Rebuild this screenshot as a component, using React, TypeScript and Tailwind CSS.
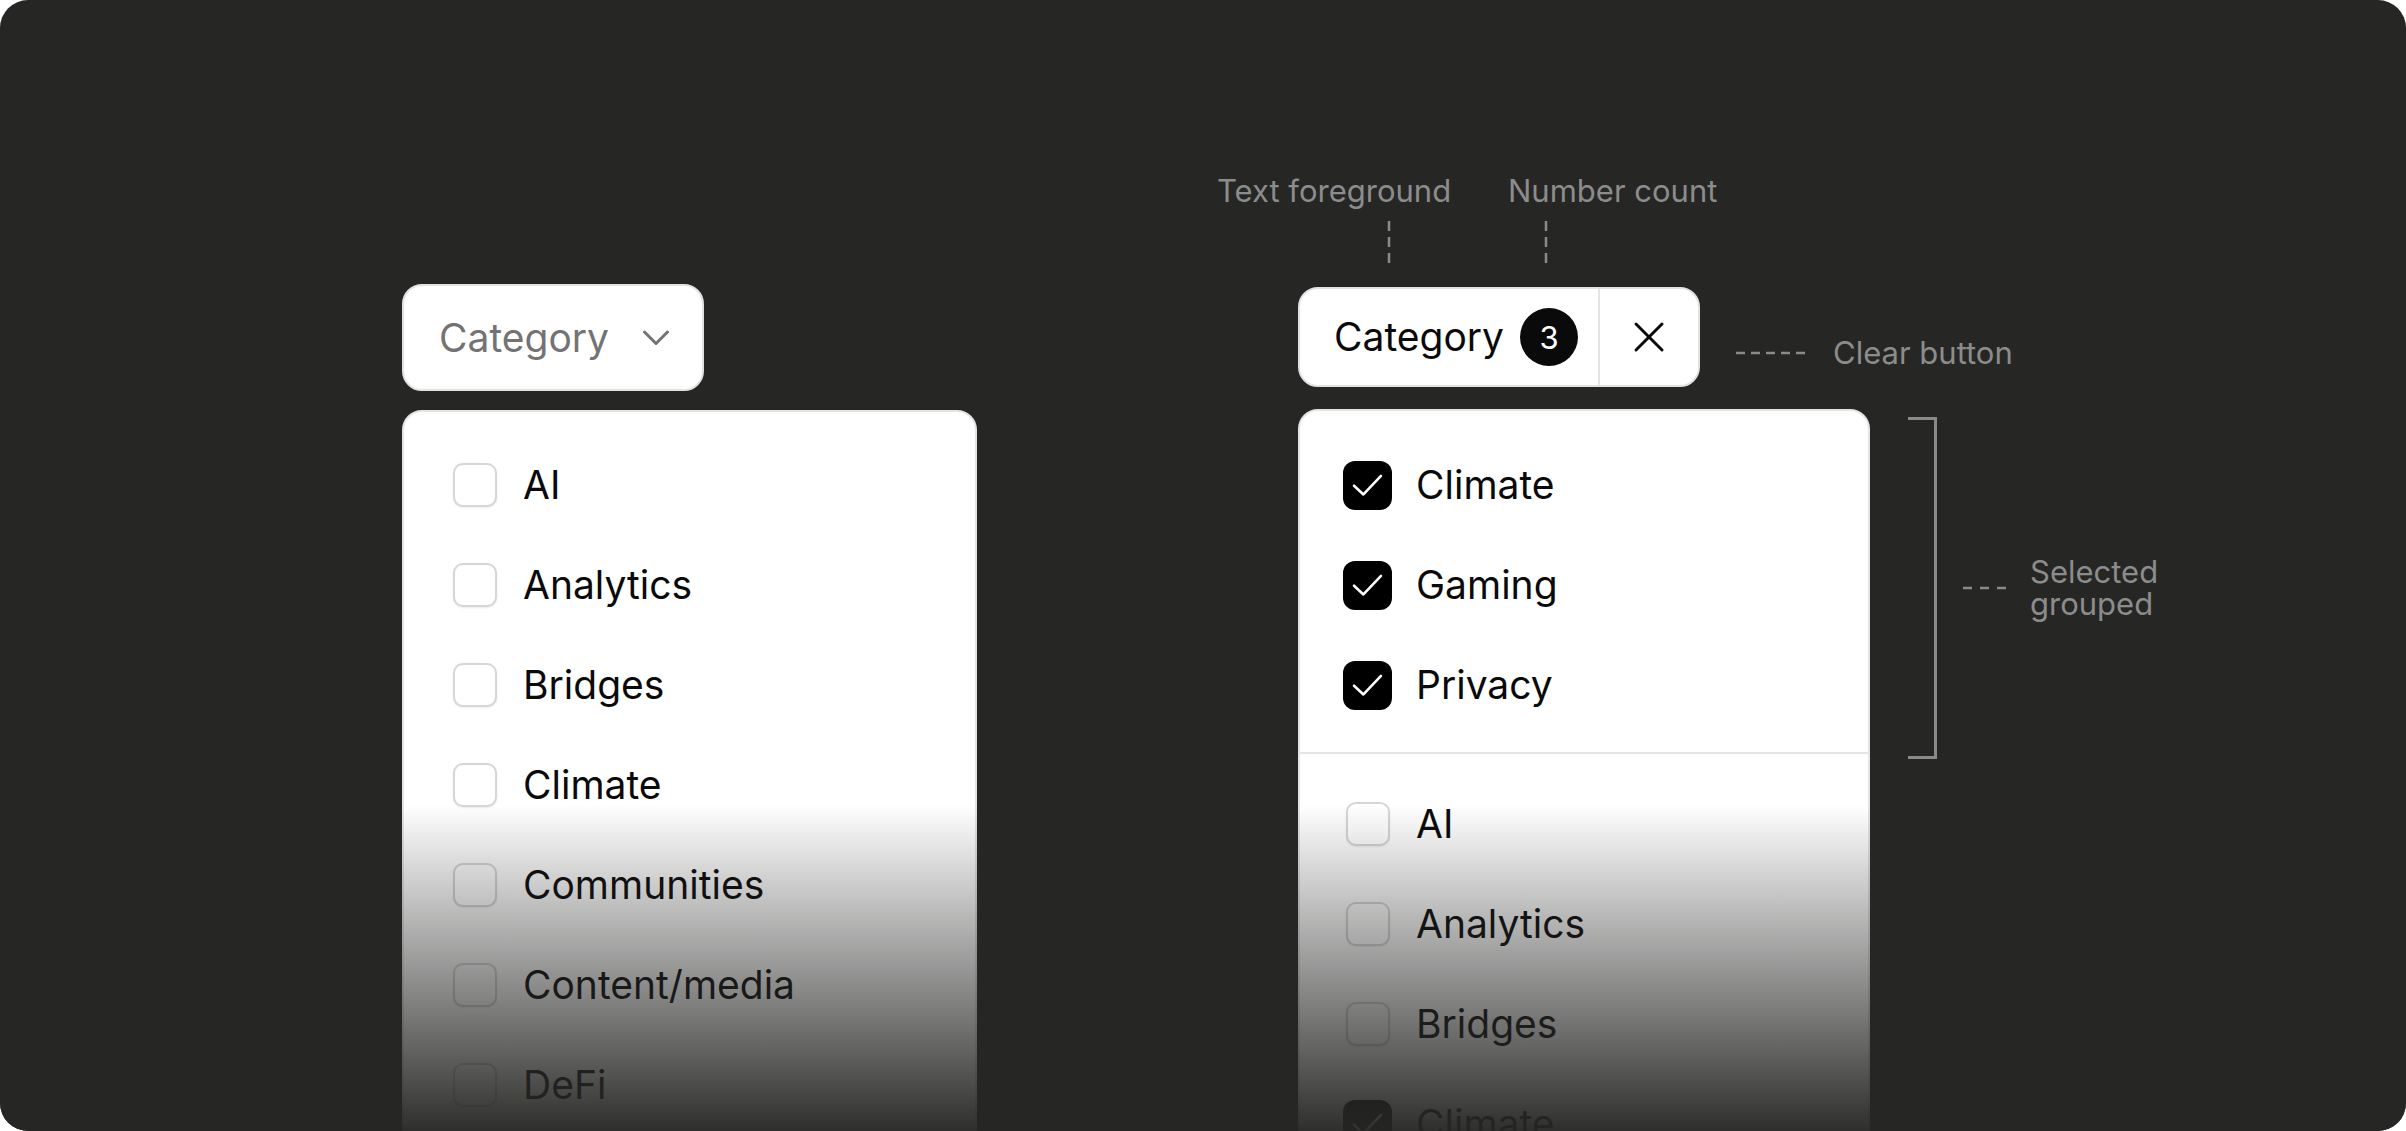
import React from "react";

type Item = { label: string; checked?: boolean };

const leftItems: Item[] = [
  { label: "AI" },
  { label: "Analytics" },
  { label: "Bridges" },
  { label: "Climate" },
  { label: "Communities" },
  { label: "Content/media" },
  { label: "DeFi" },
  { label: "Gaming" },
];

const selectedItems: Item[] = [
  { label: "Climate", checked: true },
  { label: "Gaming", checked: true },
  { label: "Privacy", checked: true },
];

const restItems: Item[] = [
  { label: "AI" },
  { label: "Analytics" },
  { label: "Bridges" },
  { label: "Climate", checked: true },
  { label: "Communities" },
];

function Checkbox({ checked }: { checked?: boolean }) {
  return (
    <div className="flex w-[49px] shrink-0 items-center justify-center">
      {checked ? (
        <div className="flex h-[49px] w-[49px] items-center justify-center rounded-[12px] bg-black">
          <svg width="49" height="49" viewBox="0 0 24 24" fill="none">
            <path
              d="M5.4 12.1 L10 16.4 L18.6 7.3"
              stroke="white"
              strokeWidth="1.25"
              strokeLinecap="round"
              strokeLinejoin="round"
            />
          </svg>
        </div>
      ) : (
        <div className="h-[44px] w-[44px] rounded-[10px] border-2 border-[#d6d6d6] bg-white shadow-[0_1px_2px_rgba(0,0,0,0.08)]" />
      )}
    </div>
  );
}

function Row({ item }: { item: Item }) {
  return (
    <div className="flex h-[100px] items-center gap-[24px]">
      <Checkbox checked={item.checked} />
      <span className="text-[39px] leading-[48px] text-[#0a0a0a]">{item.label}</span>
    </div>
  );
}

function HDash({ width, dash, gap }: { width: number; dash: number; gap: number }) {
  return (
    <svg width={width} height="4" viewBox={`0 0 ${width} 4`} className="shrink-0">
      <line x1="0" y1="2" x2={width} y2="2" stroke="#8a8a8a" strokeWidth="2.5" strokeDasharray={`${dash} ${gap}`} />
    </svg>
  );
}

function VDash() {
  return (
    <svg width="4" height="42" viewBox="0 0 4 42" className="shrink-0">
      <line x1="2" y1="0" x2="2" y2="42" stroke="#8a8a8a" strokeWidth="2.5" strokeDasharray="10 6" />
    </svg>
  );
}

export default function App() {
  return (
    <div className="h-[1131px] w-[2406px] bg-white font-[Inter,sans-serif]">
      <div className="relative h-full w-full overflow-hidden rounded-[28px] bg-[#262625]">
        <div className="flex items-start pl-[402px] pt-[173px]">
          {/* Left column */}
          <div className="mt-[111px] flex w-[575px] shrink-0 flex-col">
            <div className="flex h-[107px] w-[302px] items-center rounded-[20px] border-2 border-[#e2e2e2] bg-white pl-[35px]">
              <span className="text-[39px] leading-[48px] text-[#737373]">Category</span>
              <svg width="28" height="16" viewBox="0 0 28 16" fill="none" className="ml-[33px]">
                <polyline points="2.5,2 14,13.5 25.5,2" stroke="#737373" strokeWidth="3" strokeLinecap="round" strokeLinejoin="round" />
              </svg>
            </div>
            <div className="mt-[19px] flex h-[1000px] flex-col rounded-[20px] border-2 border-[#e4e4e4] bg-white pl-[46px] pt-[23px]">
              {leftItems.map((it) => (
                <Row key={it.label} item={it} />
              ))}
            </div>
          </div>

          {/* Right column */}
          <div className="ml-[321px] flex flex-col">
            <div className="ml-[-81px] flex text-[31px] leading-[36px] text-[#8c8c8c]">
              <span className="w-[291px]">Text foreground</span>
              <span>Number count</span>
            </div>
            <div className="mt-[12px] flex pl-[89px]">
              <VDash />
              <div className="ml-[153px]">
                <VDash />
              </div>
            </div>

            <div className="mt-[24px] flex items-start">
              <div className="flex h-[100px] w-[402px] items-stretch rounded-[20px] border-2 border-[#e2e2e2] bg-white">
                <div className="flex w-[298px] items-center pl-[34px]">
                  <span className="text-[39px] leading-[48px] text-[#0a0a0a]">Category</span>
                  <div className="ml-[16px] flex h-[58px] w-[58px] items-center justify-center rounded-full bg-[#0a0a0a] text-[31px] leading-none text-white">
                    3
                  </div>
                </div>
                <div className="w-[2px] bg-[#e4e4e4]" />
                <div className="flex flex-1 items-center justify-center">
                  <svg width="32" height="32" viewBox="0 0 32 32" fill="none">
                    <line x1="3" y1="3" x2="29" y2="29" stroke="#0a0a0a" strokeWidth="3" strokeLinecap="round" />
                    <line x1="29" y1="3" x2="3" y2="29" stroke="#0a0a0a" strokeWidth="3" strokeLinecap="round" />
                  </svg>
                </div>
              </div>
              <div className="ml-[36px] mt-[48px] flex h-[36px] items-center">
                <HDash width={69} dash={9} gap={6} />
                <span className="ml-[28px] text-[31px] leading-[36px] text-[#8c8c8c]">Clear button</span>
              </div>
            </div>

            <div className="mt-[22px] flex items-start">
              <div className="flex h-[900px] w-[572px] shrink-0 flex-col rounded-[20px] border-2 border-[#e4e4e4] bg-white">
                <div className="flex flex-col pb-[17px] pl-[43px] pt-[24px]">
                  {selectedItems.map((it) => (
                    <Row key={"s" + it.label} item={it} />
                  ))}
                </div>
                <div className="h-[2px] bg-[#e4e4e4]" />
                <div className="flex flex-col pl-[43px] pt-[20px]">
                  {restItems.map((it) => (
                    <Row key={"r" + it.label} item={it} />
                  ))}
                </div>
              </div>
              <div className="ml-[38px] mt-[8px] flex h-[342px] items-center">
                <div className="h-full w-[29px] border-y-[3px] border-r-[3px] border-[#8a8a8a]" />
                <div className="ml-[26px]">
                  <HDash width={43} dash={9} gap={8} />
                </div>
                <div className="ml-[24px] text-[31px] leading-[32px] text-[#8c8c8c]">
                  <div>Selected</div>
                  <div>grouped</div>
                </div>
              </div>
            </div>
          </div>
        </div>

        <div className="pointer-events-none absolute inset-x-0 bottom-0 top-[805px] bg-linear-to-b from-[#26262500] to-[#262625f5]" />
      </div>
    </div>
  );
}
